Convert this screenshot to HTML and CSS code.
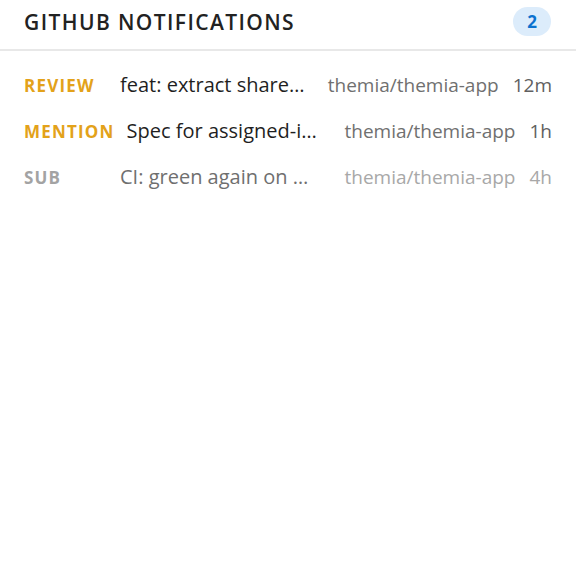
FILE: index.html
```html
<!DOCTYPE html>
<html lang="en">
<head>
    <meta charset="UTF-8">
    <meta name="viewport" content="width=device-width, initial-scale=1.0">
    <title>GitHub Notifications</title>
    <link rel="stylesheet" href="styles.css">
</head>
<body>
    <div class="panel">
        <header class="panel-header">
            <h1>GitHub Notifications</h1>
            <span class="badge">2</span>
        </header>
        <ul class="notif-list">
            <li class="notif">
                <span class="kind kind-review">Review</span>
                <span class="notif-title">feat: extract shared theme tokens into package</span>
                <span class="repo">themia/themia-app</span>
                <span class="age">12m</span>
            </li>
            <li class="notif">
                <span class="kind kind-mention">Mention</span>
                <span class="notif-title">Spec for assigned-issue filters</span>
                <span class="repo">themia/themia-app</span>
                <span class="age">1h</span>
            </li>
            <li class="notif read">
                <span class="kind kind-sub">Sub</span>
                <span class="notif-title">CI: green again on main after flaky test fix</span>
                <span class="repo">themia/themia-app</span>
                <span class="age">4h</span>
            </li>
        </ul>
    </div>
</body>
</html>
```

FILE: styles.css
```css
body {
    font-family: "Open Sans", "Noto Sans", sans-serif;
    background-color: #fff;
    color: #222;
    margin: 0;
    padding: 0;
}

.panel {
    width: 576px;
}

.panel-header {
    display: flex;
    align-items: center;
    justify-content: space-between;
    padding: 7px 25px 13px 24px;
    border-bottom: 2px solid #e8e8e8;
}

.panel-header h1 {
    margin: 0;
    font-size: 21px;
    font-weight: 600;
    letter-spacing: 1.4px;
    text-transform: uppercase;
    color: #222;
}

.badge {
    display: inline-flex;
    align-items: center;
    justify-content: center;
    min-width: 38px;
    height: 29px;
    border-radius: 15px;
    background-color: #dcecfb;
    color: #0b72cf;
    font-size: 17px;
    font-weight: 700;
}

.notif-list {
    list-style-type: none;
    margin: 0;
    padding: 11px 24px 0 24px;
}

.notif {
    display: flex;
    align-items: baseline;
    gap: 14px;
    padding: 9px 0 8px;
    line-height: 28px;
}

.kind {
    min-width: 84px;
    margin-right: -2px;
    font-size: 17px;
    font-weight: 700;
    letter-spacing: 1.2px;
    text-transform: uppercase;
}

.kind-review,
.kind-mention {
    color: #e3a21a;
}

.kind-sub {
    color: #a3a3a3;
}

.notif-title {
    flex: 1;
    min-width: 0;
    font-size: 20px;
    white-space: nowrap;
    overflow: hidden;
    text-overflow: ellipsis;
    color: #1f1f1f;
    margin-right: 9px;
}

.repo {
    font-size: 19px;
    color: #707070;
    white-space: nowrap;
}

.age {
    font-size: 19px;
    color: #606060;
    white-space: nowrap;
}

.read .notif-title {
    color: #6f6f6f;
}

.read .repo,
.read .age {
    color: #a8a8a8;
}
```
